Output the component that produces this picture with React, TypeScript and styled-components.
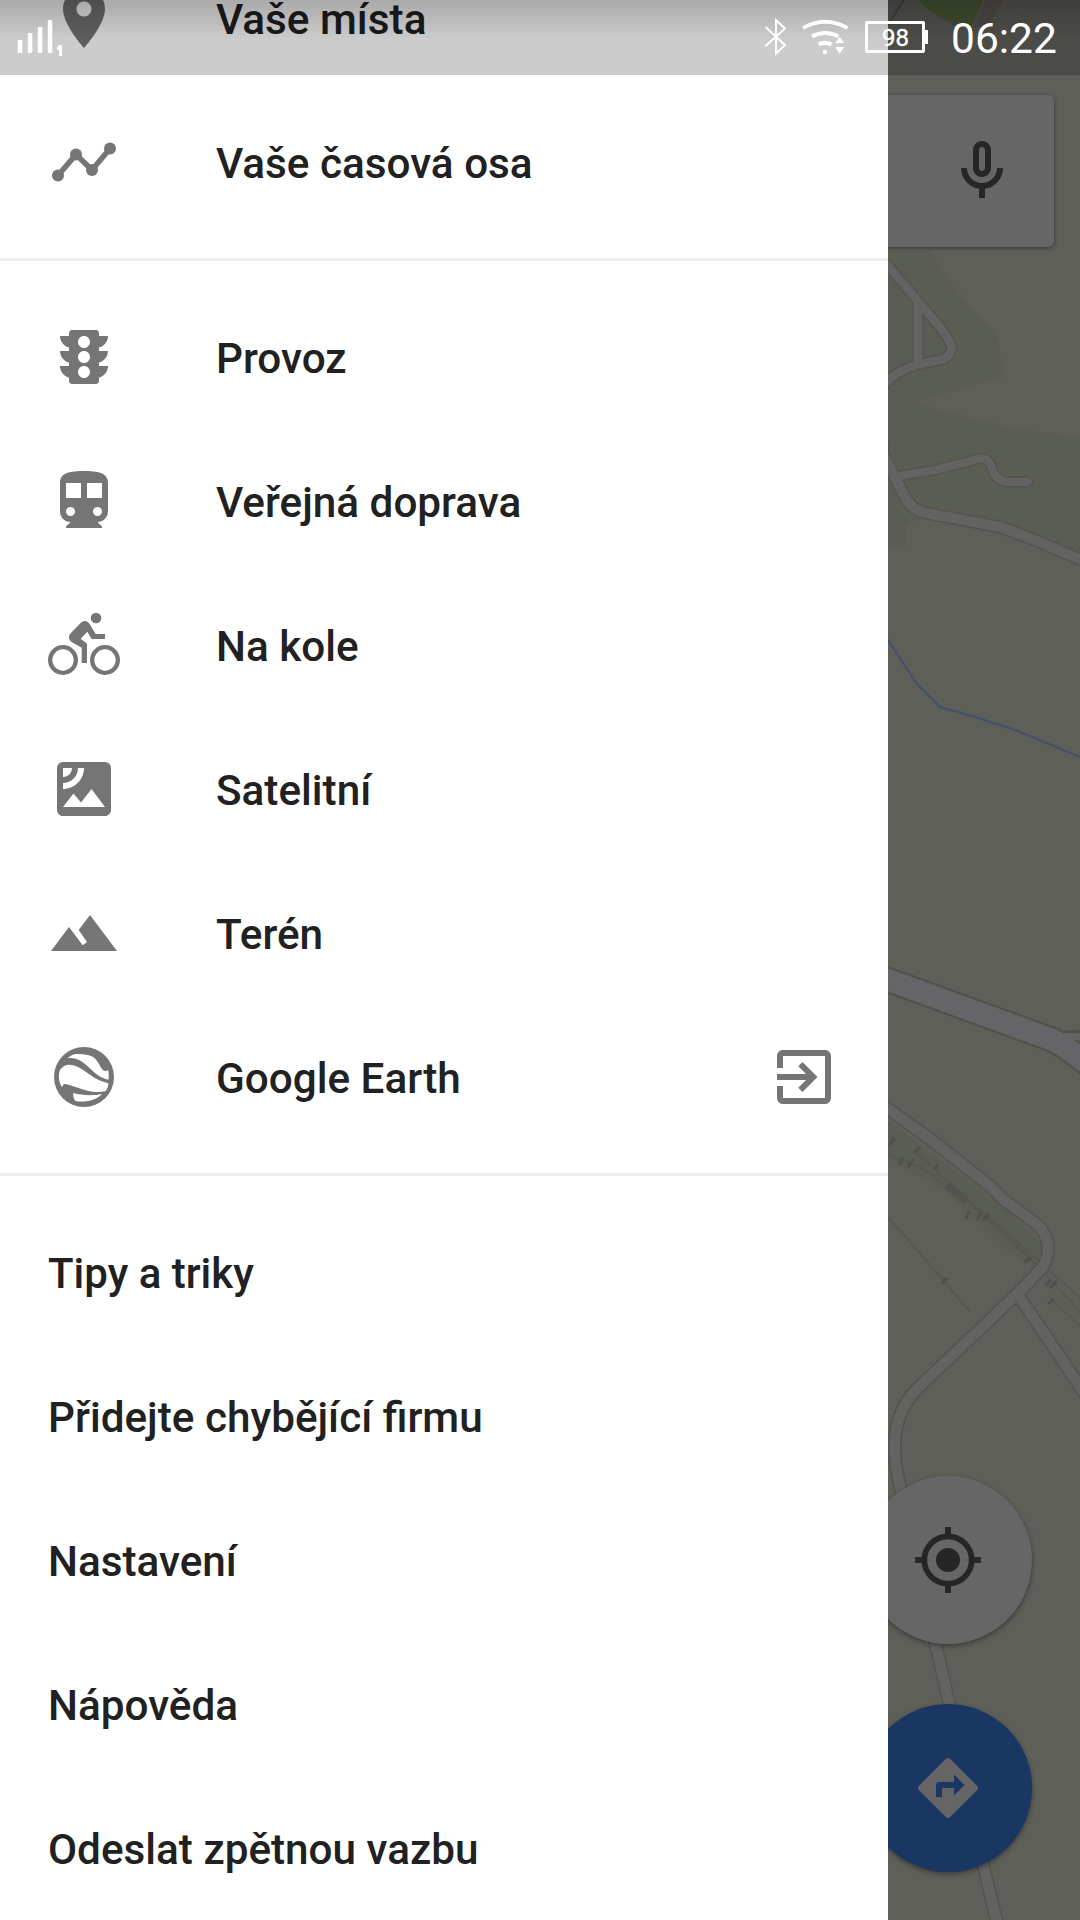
import React from "react";
import styled, { createGlobalStyle } from "styled-components";

const GlobalStyle = createGlobalStyle`
  * { box-sizing: border-box; }
  html, body { margin: 0; padding: 0; overflow: hidden; }
  body { font-family: Roboto, "Noto Sans", sans-serif; }
`;

const Screen = styled.div`
  position: relative;
  width: 1080px;
  height: 1920px;
  overflow: hidden;
  display: flex;
  background: #5e5f59;
`;

const Drawer = styled.nav`
  width: 888px;
  height: 1920px;
  flex: none;
  overflow: hidden;
  background: #fff;
  display: flex;
  flex-direction: column;
`;

const Group = styled.section<{ $first?: boolean }>`
  flex: none;
  padding: 24px 0;
  margin-top: ${(p) => (p.$first ? "-78px" : "0")};
  border-bottom: 3px solid #eee;
  &:last-child { border-bottom: none; }
`;

const Row = styled.a`
  display: flex;
  align-items: center;
  height: 144px;
  padding: 0 48px;
  color: #757575;
`;

const IconSlot = styled.span`
  width: 168px;
  height: 72px;
  flex: none;
`;

const Label = styled.span<{ $tight?: boolean }>`
  flex: 1;
  padding-top: 3px;
  font-size: ${(p) => (p.$tight ? 42 : 42.25)}px;
  font-weight: 500;
  line-height: 48px;
  color: #212121;
  white-space: nowrap;
`;

const Glyph = styled.svg`
  display: block;
  width: 72px;
  height: 72px;
  flex: none;
  fill: currentColor;
`;

const MapPane = styled.main`
  position: relative;
  width: 192px;
  height: 1920px;
  overflow: hidden;
`;

const MapCanvas = styled.svg`
  display: block;
  width: 192px;
  height: 1920px;
`;

const SearchCard = styled.div`
  position: absolute;
  top: 95px;
  right: 26px;
  width: 1028px;
  height: 152px;
  padding-right: 36px;
  border-radius: 6px;
  background: #666;
  box-shadow: 0 1px 4px rgba(0, 0, 0, 0.45);
  color: #262626;
  display: flex;
  align-items: center;
  justify-content: flex-end;
`;

const Fab = styled.div<{ $top: number; $bg: string; $fg: string }>`
  position: absolute;
  top: ${(p) => p.$top}px;
  left: -24px;
  width: 168px;
  height: 168px;
  border-radius: 50%;
  display: flex;
  align-items: center;
  justify-content: center;
  background: ${(p) => p.$bg};
  color: ${(p) => p.$fg};
  box-shadow: 0 2px 5px rgba(0, 0, 0, 0.4);
`;

const StatusBar = styled.header`
  position: absolute;
  top: 0;
  left: 0;
  width: 1080px;
  height: 75px;
  display: flex;
  align-items: center;
  padding: 0 23px 0 16px;
  color: #fff;
  background: linear-gradient(rgba(0, 0, 0, 0.17), rgba(0, 0, 0, 0) 40px), rgba(0, 0, 0, 0.2);
`;

const StatusGlyph = styled.svg<{ $w: number; $gap?: number }>`
  display: block;
  overflow: visible;
  width: ${(p) => p.$w}px;
  height: 75px;
  flex: none;
  margin-right: ${(p) => p.$gap ?? 0}px;
  fill: currentColor;
`;

const Spacer = styled.span`
  flex: 1;
`;

const Battery = styled.span`
  position: relative;
  flex: none;
  width: 60px;
  height: 32px;
  margin: 0 26px 1px 0;
  border: 3px solid #fff;
  border-radius: 2px;
  display: flex;
  align-items: center;
  justify-content: center;
  padding: 2px 0 0 1px;
  font-size: 24px;
  line-height: 26px;
  -webkit-text-stroke: 0.4px #fff;
  &::after {
    content: "";
    position: absolute;
    left: 57px;
    top: 6px;
    width: 3px;
    height: 14px;
    background: #fff;
  }
`;

const Clock = styled.span`
  flex: none;
  width: 106px;
  padding-top: 3px;
  font-size: 42.5px;
  line-height: 50px;
  white-space: nowrap;
`;

const paths = {
  place:
    "M12 2C8.13 2 5 5.13 5 9c0 5.25 7 13 7 13s7-7.75 7-13c0-3.87-3.13-7-7-7zm0 9.5c-1.38 0-2.5-1.12-2.5-2.5s1.12-2.5 2.5-2.5 2.5 1.12 2.5 2.5-1.12 2.5-2.5 2.5z",
  traffic:
    "M20 10h-3V8.86c1.72-.45 3-2 3-3.86h-3V4c0-.55-.45-1-1-1H8c-.55 0-1 .45-1 1v1H4c0 1.86 1.28 3.41 3 3.86V10H4c0 1.86 1.28 3.41 3 3.86V15H4c0 1.86 1.28 3.41 3 3.86V20c0 .55.45 1 1 1h8c.55 0 1-.45 1-1v-1.14c1.72-.45 3-2 3-3.86h-3v-1.14c1.72-.45 3-2 3-3.86zm-8 9c-1.11 0-2-.9-2-2s.89-2 2-2c1.1 0 2 .9 2 2s-.89 2-2 2zm0-5c-1.11 0-2-.9-2-2s.89-2 2-2c1.1 0 2 .9 2 2s-.89 2-2 2zm0-5c-1.11 0-2-.9-2-2 0-1.11.89-2 2-2 1.1 0 2 .89 2 2 0 1.1-.89 2-2 2z",
  transit:
    "M12 2c-4.42 0-8 .5-8 4v9.500c0 1.930 1.570 3.500 3.500 3.500L6 20.500v.5h12v-.5L16.500 19c1.930 0 3.500-1.570 3.500-3.500V6c0-3.500-3.580-4-8-4zM7.500 17c-.83 0-1.500-.67-1.500-1.500S6.670 14 7.500 14s1.500.67 1.500 1.500S8.330 17 7.500 17zm3.500-6H6V6h5v5zm5.500 6c-.83 0-1.500-.67-1.500-1.500s.67-1.500 1.500-1.500 1.500.67 1.500 1.500-.67 1.500-1.500 1.500zm1.500-6h-5V6h5v5z",
  satellite:
    "M19 3H5c-1.100 0-2 .9-2 2v14c0 1.100.9 2 2 2h14c1.100 0 2-.9 2-2V5c0-1.100-.9-2-2-2zM5 4.990h3C8 6.650 6.660 8 5 8V4.990zM5 12v-2c2.760 0 5-2.250 5-5.010h2C12 8.860 8.870 12 5 12zm0 6l3.500-4.500 2.500 3.010L14.500 12l4.500 6H5z",
  exit:
    "M10.090 15.590L11.500 17l5-5-5-5-1.410 1.410L12.670 11H3v2h9.670l-2.580 2.590zM19 3H5c-1.110 0-2 .9-2 2v4h2V5h14v14H5v-4H3v4c0 1.100.89 2 2 2h14c1.100 0 2-.9 2-2V5c0-1.100-.9-2-2-2z",
  mic:
    "M12 14c1.660 0 3-1.340 3-3V5c0-1.660-1.340-3-3-3S9 3.340 9 5v6c0 1.660 1.340 3 3 3zm-1-9c0-.55.45-1 1-1s1 .45 1 1v6c0 .55-.45 1-1 1s-1-.45-1-1V5zm6 6c0 2.760-2.240 5-5 5s-5-2.240-5-5H5c0 3.530 2.610 6.430 6 6.920V21h2v-3.080c3.390-.49 6-3.390 6-6.920h-2z",
  directions:
    "M21.710 11.290l-9-9c-.39-.39-1.020-.39-1.410 0l-9 9c-.39.39-.39 1.020 0 1.410l9 9c.39.39 1.020.39 1.410 0l9-9c.39-.38.39-1.010 0-1.410zM14 14.500V12h-4v3H8v-4c0-.55.45-1 1-1h5V7.500l3.500 3.500-3.500 3.500z",
};

const Icon = ({ d }: { d: string }) => (
  <Glyph viewBox="0 0 24 24">
    <path d={d} fillRule="evenodd" />
  </Glyph>
);

const TimelineIcon = () => (
  <Glyph viewBox="48 126 72 72">
    <path d="M58 175.500L76 154.500L92 170L110 148.500" fill="none" stroke="currentColor" strokeWidth="5.500" />
    <circle cx="58" cy="175.500" r="6" />
    <circle cx="76" cy="154.500" r="6" />
    <circle cx="92" cy="170" r="6" />
    <circle cx="110" cy="148.500" r="6" />
  </Glyph>
);

const BikeIcon = () => (
  <Glyph viewBox="144 927 216 216">
    <circle cx="189" cy="1080" r="38.500" fill="none" stroke="currentColor" strokeWidth="13" />
    <circle cx="315" cy="1080" r="38.500" fill="none" stroke="currentColor" strokeWidth="13" />
    <circle cx="288" cy="954" r="16" />
    <path d="M315 1002H287L271 976C266 966 260 963 255 963C249 963 245 966 242 969L212 1000C208 1004 207 1008 207 1012C207 1018 210 1023 215 1026L245 1043V1089H261V1034C261 1031 260 1030 258 1028L242 1016L262 995L275 1017H315Z" />
  </Glyph>
);

const TerrainIcon = () => (
  <Glyph viewBox="144 531 216 216">
    <path d="M153 693L207 621L248 676L261 666L236 630L270 585L351 693Z" />
  </Glyph>
);

const EarthIcon = () => (
  <Glyph viewBox="144 963 216 216">
    <circle cx="252" cy="1071" r="90" />
    <path
      fill="#fff"
      d="M202 1015C210 1008 218 1003 226 1002C248 1001 266 1004 278 1010C296 1020 302 1050 314 1053C320 1054 322 1051 324 1050C327 1060 327 1070 325 1079C300 1074 284 1059 262 1038C242 1020 224 1011 202 1015ZM180 1050C190 1036 204 1031 220 1036C248 1044 268 1066 290 1077C303 1083 315 1087 325 1090C325 1100 322 1108 316 1114C286 1120 258 1113 236 1104C216 1097 204 1094 196 1092C190 1091 188 1096 187 1102C176 1088 174 1066 180 1050ZM220 1119C244 1126 280 1128 306 1122C290 1140 256 1149 226 1143C221 1137 219 1128 220 1119Z"
    />
  </Glyph>
);

const LocationIcon = () => (
  <Glyph viewBox="0 0 24 24">
    <circle cx="12" cy="12" r="7.900" fill="none" stroke="currentColor" strokeWidth="1.900" />
    <circle cx="12" cy="12" r="4" />
    <path d="M11 1h2v3h-2zM11 20h2v3h-2zM1 11h3v2H1zM20 11h3v2h-3z" />
  </Glyph>
);

const layers = [
  { label: "Provoz", icon: <Icon d={paths.traffic} /> },
  { label: "Veřejná doprava", icon: <Icon d={paths.transit} /> },
  { label: "Na kole", icon: <BikeIcon /> },
  { label: "Satelitní", icon: <Icon d={paths.satellite} /> },
  { label: "Terén", icon: <TerrainIcon /> },
  { label: "Google Earth", icon: <EarthIcon />, external: true },
];

const links = [
  { label: "Tipy a triky", tight: true },
  { label: "Přidejte chybějící firmu" },
  { label: "Nastavení" },
  { label: "Nápověda" },
  { label: "Odeslat zpětnou vazbu" },
];

const roads = [
  { d: "M880 256L916 299L940 327Q950 341 952 347Q950 356 944 359L918 364.500C902 369 890 377 882 387V439Q886 460 880 470", w: 8.500 },
  { d: "M918 302V363", w: 8.500 },
  { d: "M880 437L906 488Q914 500 926 502L1000 516Q1030 526 1090 553", w: 10, shift: 11 },
  { d: "M898 476L935 470L978 459Q988 456 992 468Q995 481 1008 482H1028", w: 8 },
  { d: "M880 1103L930 1139L990 1186L1004 1200L1034 1222Q1048 1233 1048 1248Q1048 1259 1042 1268L1018 1293L916 1390Q884 1424 900 1486L936 1645L949 1703L984 1868L1000 1935", w: 10.500 },
  { d: "M1020 1298L1090 1401", w: 10.500 },
];

const ties = ["M890 1139l4-8", "M915 1146l5-6", "M899 1158l4-7", "M908 1160l5-8", "M934 1162l4-5", "M945 1180l7-4", "M966 1210l3-7", "M977 1211l4-8", "M983 1212l6-7", "M1024 1252l7-5", "M1045 1275l6-6", "M1050 1277l7-7", "M1048 1292l6-5", "M941 1273l6-6"];

const MapView = () => (
  <MapCanvas viewBox="888 0 192 1920">
    <path fill="#5a5d54" d="M888 251H930L955 289L996 334L1005 376L914 403L1010 428L1080 437V551L1000 530L926 517L906 525V548H888Z" />
    <path fill="#4d5a38" d="M918 0H983L972 26L958 27L930 12Z" />
    <path fill="#5c5653" d="M985 0H1003L987 28H974Z" />
    <path fill="#5c5c5b" d="M888 0H904L888 26Z" />
    <path d="M904 0L882 34" stroke="#4a4a46" strokeWidth="2" />
    <path fill="#5a5d53" d="M888 1122L1000 1204L1042 1245L1036 1267L1010 1252L950 1196L888 1157Z" />
    <g transform="translate(0 -31.2) scale(1 1.0332)" opacity=".75">
      <g fill="none" stroke="#52534f" strokeWidth="1.500">
        <path d="M888 1148L920 1160L960 1186L1032 1250L1100 1320M915 1144L950 1176L1030 1243L1100 1304M1052 1288L1090 1323" opacity=".8" />
        <path d="M888 1208L943 1269L970 1300" />
      </g>
      <path d="M948 1178L966 1192" stroke="#50514f" strokeWidth="8" />
      {ties.map((d) => (
        <path key={d} d={d} stroke="#4c4d4b" strokeWidth="3" />
      ))}
    </g>
    <g fill="none" strokeLinecap="round" strokeLinejoin="round">
      {roads.map((r) => (
        <path key={r.d} d={r.d} transform={`translate(0 ${r.shift ?? 0})`} stroke="#53544e" strokeWidth={r.w + 3} />
      ))}
      {roads.map((r) => (
        <path key={r.d} d={r.d} transform={`translate(0 ${r.shift ?? 0})`} stroke="#636362" strokeWidth={r.w} />
      ))}
      <path d="M1060 1037Q1070 1033 1090 1036" stroke="#50514b" strokeWidth="10" />
      <path d="M880 977L1053 1040Q1062 1044 1100 1073" stroke="#50514b" strokeWidth="26" />
      <path d="M1057 1038Q1070 1034 1090 1039" stroke="#636362" strokeWidth="7" />
      <path d="M880 977L1053 1040Q1062 1044 1100 1073" stroke="#656567" strokeWidth="22" />
      <path d="M884 634L917 684L940 707Q980 718 1015 730L1090 761" stroke="#445069" strokeWidth="2" />
    </g>
  </MapCanvas>
);

export default function App() {
  return (
    <>
      <GlobalStyle />
      <Screen>
        <Drawer>
          <Group $first>
            <Row>
              <IconSlot><Icon d={paths.place} /></IconSlot>
              <Label>Vaše místa</Label>
            </Row>
            <Row>
              <IconSlot><TimelineIcon /></IconSlot>
              <Label>Vaše časová osa</Label>
            </Row>
          </Group>
          <Group>
            {layers.map((l) => (
              <Row key={l.label}>
                <IconSlot>{l.icon}</IconSlot>
                <Label>{l.label}</Label>
                {l.external && <Icon d={paths.exit} />}
              </Row>
            ))}
          </Group>
          <Group>
            {links.map((l) => (
              <Row key={l.label}>
                <Label $tight={l.tight}>{l.label}</Label>
              </Row>
            ))}
          </Group>
        </Drawer>
        <MapPane>
          <MapView />
          <SearchCard><Icon d={paths.mic} /></SearchCard>
          <Fab $top={1476} $bg="#666" $fg="#262626"><LocationIcon /></Fab>
          <Fab $top={1704} $bg="#1a3662" $fg="#656565"><Icon d={paths.directions} /></Fab>
        </MapPane>
        <StatusBar>
          <StatusGlyph $w={48} viewBox="16 0 48 75">
            <rect x="17.800" y="40" width="4.500" height="13" rx="1" />
            <rect x="27.800" y="33" width="4.500" height="20" rx="1" />
            <rect x="37.800" y="27" width="4.500" height="26" rx="1" />
            <rect x="47.800" y="20" width="4.500" height="33" rx="1" />
            <path d="M59 45h3v11h-3v-6h-2v-3z" />
          </StatusGlyph>
          <Spacer />
          <StatusGlyph $w={24} $gap={15} viewBox="764 0 24 75">
            <path d="M765.500 27L785 45L776 53.500V20L785 28.500L765.500 46" fill="none" stroke="#fff" strokeWidth="2" />
          </StatusGlyph>
          <StatusGlyph $w={46} $gap={16} viewBox="803 0 46 75">
            <g fill="none" stroke="#fff" strokeWidth="3.800">
              <path d="M803 28Q825 15.500 847.500 28" />
              <path d="M812 36.500Q825 29.500 838.500 36.500" />
              <path d="M818.500 44.500Q825 41 831.500 44.500" />
            </g>
            <circle cx="825" cy="52" r="2.200" />
            <path d="M839.700 37l4.500 6h-9zM839.700 53.500l4.500-6.500h-9z" />
          </StatusGlyph>
          <Battery>98</Battery>
          <Clock>06:22</Clock>
        </StatusBar>
      </Screen>
    </>
  );
}
